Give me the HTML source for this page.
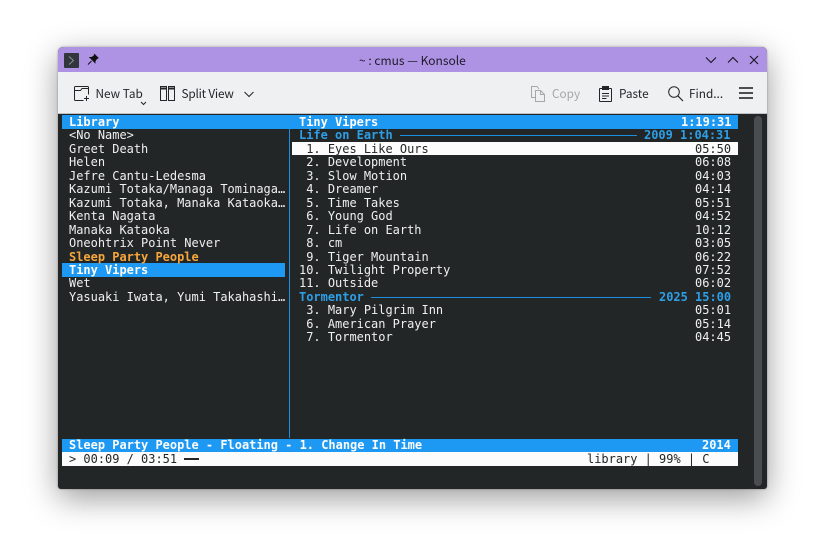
<!DOCTYPE html>
<html><head><meta charset="utf-8">
<style>
html,body{margin:0;padding:0;width:825px;height:558px;overflow:hidden;background:#fff}
#win{position:absolute;left:58px;top:47px;width:709px;height:442px;border-radius:5px 5px 3px 3px;background:#232627;box-shadow:0 9px 32px rgba(0,0,0,.4),0 0 2px rgba(0,0,0,.35);overflow:hidden}
#tb{position:absolute;left:0;top:0;width:709px;height:25px;background:#ae93e4}
#tl{position:absolute;left:0;top:25px;width:709px;height:41px;background:#eff0f1;border-bottom:1px solid #bfc2c4}
.ui{position:absolute;font:11.8px/17px "Noto Sans CJK SC","Liberation Sans",sans-serif;color:#232629;white-space:pre}
.t{position:absolute;margin-top:.9px;font:11.97px/13.47px "DejaVu Sans Mono",monospace;white-space:pre;color:#eff0f1;height:13.47px}
.b{font-weight:bold}
svg{position:absolute;overflow:visible}
</style></head><body>
<div id="win">
<div id="tb"></div><div id="tl"></div>
</div>

<!-- title bar -->
<svg style="left:64px;top:53px" width="15" height="15"><rect width="15" height="15" rx="1" fill="#31363b"/><path d="M5 3.500L9.500 7.500L5 11.500" fill="none" stroke="#8a8f94" stroke-width="1"/></svg>
<svg style="left:87px;top:54px" width="12" height="12"><path d="M7.500 0.500L11 4L9.800 4.500L8 7L8 8.500L3 3.500L4.500 3.500L7 2Z M4.500 7L1 10.500" fill="#111" stroke="#111" stroke-width="1"/></svg>
<div class="ui" style="left:359px;top:52px;font-size:12px;color:#1f1a2a">~ : cmus — Konsole</div>
<svg style="left:705px;top:56px" width="12" height="8"><path d="M1 1.500L6 6.500L11 1.500" fill="none" stroke="#17131f" stroke-width="1.100"/></svg>
<svg style="left:727px;top:56px" width="12" height="8"><path d="M1 6.500L6 1.500L11 6.500" fill="none" stroke="#17131f" stroke-width="1.100"/></svg>
<svg style="left:749px;top:55px" width="10" height="10"><path d="M1 1L9 9M9 1L1 9" fill="none" stroke="#17131f" stroke-width="1.100"/></svg>

<!-- toolbar -->
<svg style="left:74px;top:86px" width="16" height="16" fill="none" stroke="#232629" stroke-width="1"><path d="M9.500 14.500H1.500C.9 14.500.5 14.100.5 13.500V1.500C.5 .9.9.5 1.500.5H13.500C14.100.5 14.500.9 14.500 1.500V8.500M.5 4.500H6.500L8 2.500H14.500"/><path d="M12.500 10V15M10 12.500H15"/></svg>
<div class="ui" style="left:95.500px;top:85px">New Tab</div>
<svg style="left:140px;top:101px" width="7" height="5"><path d="M1 1L3.500 3.500L6 1" fill="none" stroke="#232629"/></svg>
<svg style="left:160px;top:86px" width="16" height="15" fill="none" stroke="#232629" stroke-width="1"><rect x=".5" y=".5" width="6" height="14"/><rect x="8.500" y=".5" width="6" height="14"/><path d="M.5 2.500H6.500M8.500 2.500H14.500" stroke-width="2"/></svg>
<div class="ui" style="left:181.500px;top:85px;letter-spacing:-.2px">Split View</div>
<svg style="left:244px;top:91px" width="10" height="7"><path d="M.5 1L5 5.500L9.500 1" fill="none" stroke="#232629"/></svg>
<svg style="left:531px;top:86px" width="14" height="16" fill="none" stroke="#a5a7a9" stroke-width="1"><path d="M4.500 11.500H.5V.5H6L8 3"/><path d="M4.500 4.500H9.500L13.500 8.500V15.500H4.500ZM9.500 4.500V8.500H13.500"/></svg>
<div class="ui" style="left:552px;top:85px;color:#a5a7a9">Copy</div>
<svg style="left:599px;top:86px" width="14" height="16"><path d="M3.500 2.500H1C.7 2.500.5 2.700.5 3V15C.5 15.300.7 15.500 1 15.500H12C12.300 15.500 12.500 15.300 12.500 15V3C12.500 2.700 12.300 2.500 12 2.500H9.500" fill="none" stroke="#232629"/><rect x="3" y="0" width="7" height="4" fill="#232629"/><path d="M3 7.500H10M3 10H10M3 12.500H7.500" stroke="#232629"/></svg>
<div class="ui" style="left:619px;top:85px">Paste</div>
<svg style="left:668px;top:86px" width="16" height="16" fill="none" stroke="#232629" stroke-width="1"><circle cx="6" cy="6" r="5.300"/><path d="M9.800 9.800L15 15" stroke-width="1.200"/></svg>
<div class="ui" style="left:689px;top:85px">Find...</div>
<svg style="left:739px;top:87px" width="14" height="12"><path d="M0 1H14M0 6H14M0 11H14" stroke="#17191b" stroke-width="1.500"/></svg>

<!-- scrollbar -->
<div style="position:absolute;left:754px;top:116px;width:8px;height:370px;border-radius:4px;background:#4a4d4f"></div>
<!-- vertical separator -->
<div style="position:absolute;left:289px;top:128px;width:1px;height:310px;background:#1d8ddf"></div>

<!-- bars -->
<div style="position:absolute;left:62px;top:115px;width:676px;height:13.500px;background:#1d99f3"></div>
<div style="position:absolute;left:62px;top:263.200px;width:223px;height:13.500px;background:#1d99f3"></div>
<div style="position:absolute;left:292px;top:141.900px;width:446px;height:13.500px;background:#fcfcfc"></div>
<div style="position:absolute;left:62px;top:438.500px;width:676px;height:13.500px;background:#1d99f3"></div>
<div style="position:absolute;left:62px;top:452px;width:676px;height:13.500px;background:#fcfcfc"></div>

<!-- album rules -->
<div style="position:absolute;left:400px;top:135px;width:237px;height:1px;background:#1d8ddf"></div>
<div style="position:absolute;left:371px;top:297px;width:280px;height:1px;background:#1d8ddf"></div>
<div style="position:absolute;left:184px;top:458px;width:15px;height:2px;background:#232627"></div>

<!-- left column -->
<div class="t b" style="left:69px;top:115px;color:#fcfcfc">Library</div>
<div class="t" style="left:69px;top:128.500px">&lt;No Name&gt;</div>
<div class="t" style="left:69px;top:142px">Greet Death</div>
<div class="t" style="left:69px;top:155.400px">Helen</div>
<div class="t" style="left:69px;top:168.900px">Jefre Cantu-Ledesma</div>
<div class="t" style="left:69px;top:182.400px">Kazumi Totaka/Managa Tominaga…</div>
<div class="t" style="left:69px;top:195.800px">Kazumi Totaka, Manaka Kataoka…</div>
<div class="t" style="left:69px;top:209.300px">Kenta Nagata</div>
<div class="t" style="left:69px;top:222.800px">Manaka Kataoka</div>
<div class="t" style="left:69px;top:236.200px">Oneohtrix Point Never</div>
<div class="t b" style="left:69px;top:249.700px;color:#f6a63c">Sleep Party People</div>
<div class="t b" style="left:69px;top:263.200px;color:#fcfcfc">Tiny Vipers</div>
<div class="t" style="left:69px;top:276.600px">Wet</div>
<div class="t" style="left:69px;top:290.100px">Yasuaki Iwata, Yumi Takahashi…</div>

<!-- right column -->
<div class="t b" style="left:299px;top:115px;color:#fcfcfc">Tiny Vipers</div>
<div class="t b" style="left:681px;top:115px;color:#fcfcfc">1:19:31</div>
<div class="t b" style="left:299px;top:128.500px;color:#2d9fe6">Life on Earth</div>
<div class="t b" style="left:644px;top:128.500px;color:#2d9fe6">2009 1:04:31</div>
<div class="t" style="left:299px;top:142px;color:#232627"> 1. Eyes Like Ours</div>
<div class="t" style="left:695px;top:142px;color:#232627">05:50</div>
<div class="t" style="left:299px;top:155.400px"> 2. Development</div><div class="t" style="left:695px;top:155.400px">06:08</div>
<div class="t" style="left:299px;top:168.900px"> 3. Slow Motion</div><div class="t" style="left:695px;top:168.900px">04:03</div>
<div class="t" style="left:299px;top:182.400px"> 4. Dreamer</div><div class="t" style="left:695px;top:182.400px">04:14</div>
<div class="t" style="left:299px;top:195.800px"> 5. Time Takes</div><div class="t" style="left:695px;top:195.800px">05:51</div>
<div class="t" style="left:299px;top:209.300px"> 6. Young God</div><div class="t" style="left:695px;top:209.300px">04:52</div>
<div class="t" style="left:299px;top:222.800px"> 7. Life on Earth</div><div class="t" style="left:695px;top:222.800px">10:12</div>
<div class="t" style="left:299px;top:236.200px"> 8. cm</div><div class="t" style="left:695px;top:236.200px">03:05</div>
<div class="t" style="left:299px;top:249.700px"> 9. Tiger Mountain</div><div class="t" style="left:695px;top:249.700px">06:22</div>
<div class="t" style="left:299px;top:263.200px">10. Twilight Property</div><div class="t" style="left:695px;top:263.200px">07:52</div>
<div class="t" style="left:299px;top:276.600px">11. Outside</div><div class="t" style="left:695px;top:276.600px">06:02</div>
<div class="t b" style="left:299px;top:290.100px;color:#2d9fe6">Tormentor</div>
<div class="t b" style="left:659px;top:290.100px;color:#2d9fe6">2025 15:00</div>
<div class="t" style="left:299px;top:303.600px"> 3. Mary Pilgrim Inn</div><div class="t" style="left:695px;top:303.600px">05:01</div>
<div class="t" style="left:299px;top:317px"> 6. American Prayer</div><div class="t" style="left:695px;top:317px">05:14</div>
<div class="t" style="left:299px;top:330.500px"> 7. Tormentor</div><div class="t" style="left:695px;top:330.500px">04:45</div>

<!-- status -->
<div class="t b" style="left:69px;top:438.500px;color:#fcfcfc">Sleep Party People - Floating - 1. Change In Time</div>
<div class="t b" style="left:702px;top:438.500px;color:#fcfcfc">2014</div>
<div class="t" style="left:69px;top:452px;color:#232627">&gt; 00:09 / 03:51</div>
<div class="t" style="left:587px;top:452px;color:#232627">library | 99% | C</div>
</body></html>
